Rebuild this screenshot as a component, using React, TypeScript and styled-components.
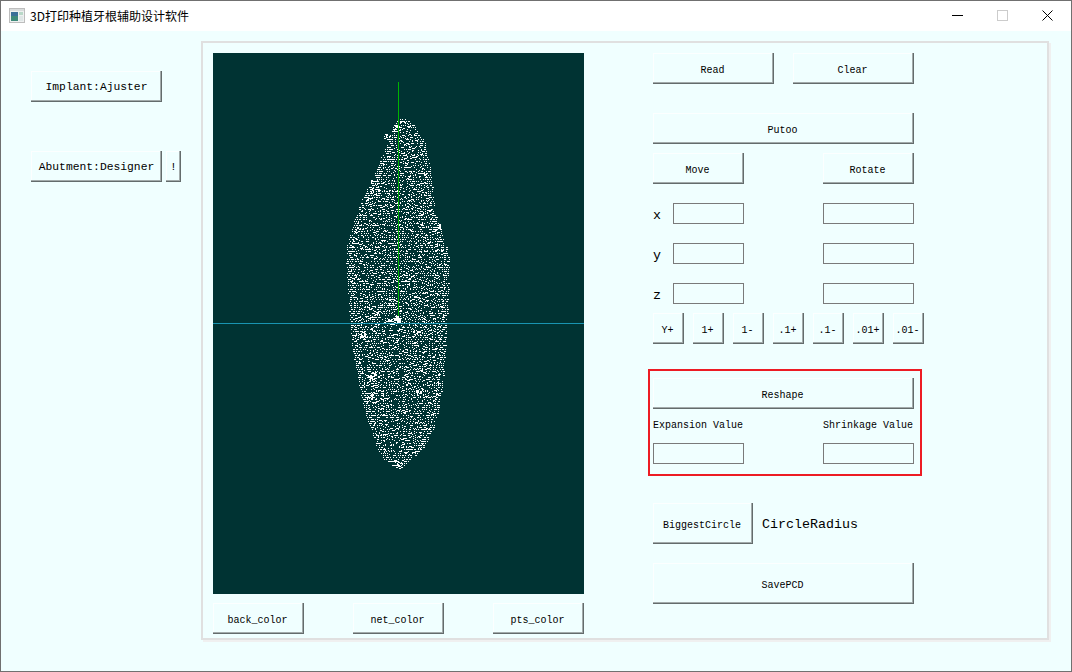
import React, { useMemo } from "react";
import styled, { createGlobalStyle } from "styled-components";

const Global = createGlobalStyle`
  html, body { margin: 0; padding: 0; background: #f0ffff; }
  * { box-sizing: border-box; }
`;

const Win = styled.div`
  width: 1072px;
  height: 672px;
  border: 1px solid #707070;
  background: #f0ffff;
  display: flex;
  flex-direction: column;
  overflow: hidden;
`;
const TitleBar = styled.header`
  height: 30px;
  background: #fff;
  display: flex;
  align-items: center;
  padding: 0 1px 2px 8px;
  flex: none;
`;
const Title = styled.span`
  margin-left: 5px;
  font: 12px "Noto Sans CJK SC", "Liberation Sans", sans-serif;
  color: #000;
  flex: 1;
`;
const WinControl = styled.div`
  width: 45px;
  height: 28px;
  display: flex;
  align-items: center;
  justify-content: center;
`;
const Body = styled.main`
  flex: 1;
  display: flex;
  align-items: flex-start;
`;
const Side = styled.aside`
  width: 200px;
  flex: none;
  padding: 40px 0 0 30px;
`;
const SideRow = styled.div<{ $top?: number }>`
  display: flex;
  gap: 4px;
  margin-top: ${(p) => p.$top ?? 0}px;
`;
const Btn = styled.button<{ $w: number; $h?: number; $big?: boolean }>`
  width: ${(p) => p.$w}px;
  height: ${(p) => p.$h ?? 31}px;
  flex: none;
  padding: ${(p) => (p.$big ? 1 : 4)}px ${(p) => (p.$big ? 0 : 2)}px 0 0;
  border: 0;
  border-radius: 0;
  background: #f0ffff;
  color: #000;
  font-family: "Liberation Mono", "DejaVu Sans Mono", monospace;
  font-size: ${(p) => (p.$big ? 11.33 : 10)}px;
  white-space: nowrap;
  box-shadow: inset -1px -1px 0 #646c6c, inset -2px -2px 0 #a3abab, inset 1px 1px 0 #fcffff;
`;
const Panel = styled.section`
  width: 848px;
  height: 599px;
  margin-top: 10px;
  border: 2px solid #e0e0e0;
  box-shadow: 2px 2px 0 #f0f0f0;
  padding: 10px 0 0 10px;
  display: flex;
  gap: 69px;
`;
const ViewCol = styled.div`
  width: 371px;
  flex: none;
`;
const Canvas = styled.div`
  width: 371px;
  height: 541px;
  background: #003333;
`;
const ColorRow = styled.div`
  display: flex;
  justify-content: space-between;
  margin-top: 9px;
`;
const ToolCol = styled.div`
  width: 261px;
  flex: none;
`;
const Row = styled.div<{ $top?: number; $gap?: number; $between?: boolean }>`
  display: flex;
  align-items: center;
  margin-top: ${(p) => p.$top ?? 0}px;
  gap: ${(p) => p.$gap ?? 0}px;
  justify-content: ${(p) => (p.$between ? "space-between" : "flex-start")};
`;
const AxisRow = styled.div<{ $top: number }>`
  display: grid;
  grid-template-columns: 20px 71px 1fr 91px;
  align-items: center;
  margin-top: ${(p) => p.$top}px;
`;
const AxisLabel = styled.span`
  padding-top: 3px;
  font: 13.33px "Liberation Mono", monospace;
  color: #000;
`;
const Field = styled.input<{ $w: number; $col?: number }>`
  width: ${(p) => p.$w}px;
  height: 21px;
  grid-column: ${(p) => p.$col ?? "auto"};
  border: 1px solid #7a7a7a;
  border-radius: 0;
  background: #f0ffff;
  padding: 0;
  outline: none;
`;
const RedBox = styled.div`
  width: 274px;
  height: 107px;
  margin: 25px 0 0 -5px;
  border: 2px solid #ed1c24;
  padding: 7px 0 0 3px;
`;
const Inner = styled.div`
  width: 261px;
`;
const SmallLabel = styled.span`
  width: 91px;
  font: 10px/14px "Liberation Mono", monospace;
  color: #000;
  white-space: nowrap;
`;
const Radius = styled.span`
  margin-left: 9px;
  padding-top: 2px;
  font: 13.33px "Liberation Mono", monospace;
  color: #000;
`;

const OUT: [number, number, number][] = [
  [119, 398, 405], [122, 394, 412], [130, 391, 418], [143, 387, 425], [160, 380, 429],
  [177, 373, 431], [193, 365, 433], [210, 357, 435], [227, 352, 440], [243, 347, 445],
  [260, 346, 449], [277, 347, 449], [293, 348, 448], [323, 350, 447], [347, 352, 445],
  [380, 358, 443], [413, 365, 438], [430, 371, 433], [447, 377, 424], [460, 384, 410], [466, 392, 403],
];

function edges(y: number): [number, number] {
  for (let i = 0; i < OUT.length - 1; i++) {
    const a = OUT[i], b = OUT[i + 1];
    if (y >= a[0] && y <= b[0]) {
      const t = (y - a[0]) / (b[0] - a[0]);
      return [a[1] + (b[1] - a[1]) * t, a[2] + (b[2] - a[2]) * t];
    }
  }
  return [398, 398];
}

function buildCloud(): string {
  let s = 20240611;
  const r = () => {
    s = (s + 0x6d2b79f5) | 0;
    let t = Math.imul(s ^ (s >>> 15), 1 | s);
    t = (t + Math.imul(t ^ (t >>> 7), 61 | t)) ^ t;
    return ((t ^ (t >>> 14)) >>> 0) / 4294967296;
  };
  const ox = 213, oy = 53;
  let d = "";
  const dot = (x: number, y: number, w = 1, h = 1) => {
    d += `M${Math.round(x) - ox} ${Math.round(y) - oy}h${w}v${h}h${-w}z`;
  };
  for (let y = 119; y <= 466; y += 2) {
    const [l, rr] = edges(y);
    for (const off of [0, 1, 2]) {
      if (r() < 0.8) dot(l + off * 2 + r() * 1.5, y, r() < 0.25 ? 2 : 1);
      if (r() < 0.8) dot(rr - off * 2 - r() * 1.5, y, r() < 0.25 ? 2 : 1);
    }
    let x = l + 4 + r() * 2;
    while (x < rr - 4) {
      const v = r();
      if (v < 0.8) dot(x, y + (r() < 0.3 ? 1 : 0), v < 0.07 ? 3 : v < 0.2 ? 2 : 1);
      x += 2 + Math.floor(r() * 2);
    }
  }
  const blobs = [[375, 190], [387, 137], [397, 128], [392, 302], [362, 335], [396, 319], [416, 333], [372, 375], [419, 390], [370, 396], [371, 377], [398, 465], [437, 227], [374, 182], [391, 322]];
  for (const [bx, by] of blobs) {
    for (let i = 0; i < 16; i++) dot(bx + (r() - 0.5) * 7, by + (r() - 0.5) * 6, 1 + Math.floor(r() * 2));
  }
  return d;
}

const CloudSvg = styled.svg`
  display: block;
`;

function PointCloud() {
  const d = useMemo(buildCloud, []);
  return (
    <CloudSvg width={371} height={541} viewBox="0 0 371 541" shapeRendering="crispEdges">
      <path d={d} fill="#ffffff" />
      <rect x={185} y={29} width={1} height={238} fill="#00b400" />
      <rect x={0} y={270} width={371} height={1} fill="#22b5dc" opacity={0.75} />
      <path d="M185 262l3 5h-6zM184 267h4v3h-4z" fill="#ffffff" />
    </CloudSvg>
  );
}

const AppIcon = () => (
  <svg width="16" height="15" viewBox="0 0 16 15">
    <rect x="0.5" y="0.5" width="15" height="14" fill="#eef0f0" stroke="#bdbdbd" />
    <rect x="1" y="1" width="14" height="2" fill="#d9dcdc" />
    <rect x="2" y="4" width="7" height="9" fill="#3f8a7a" />
    <rect x="2" y="4" width="7" height="4" fill="#3a6f98" />
    <rect x="10" y="4" width="4" height="3" fill="#b9d8c8" />
    <rect x="10" y="8" width="4" height="5" fill="#dfe6e6" />
  </svg>
);

export default function App() {
  return (
    <Win>
      <Global />
      <TitleBar>
        <AppIcon />
        <Title>3D打印种植牙根辅助设计软件</Title>
        <WinControl>
          <svg width="11" height="11" viewBox="0 0 11 11" shapeRendering="crispEdges"><rect x="0" y="5" width="11" height="1" fill="#000" /></svg>
        </WinControl>
        <WinControl>
          <svg width="11" height="11" viewBox="0 0 11 11" shapeRendering="crispEdges"><rect x="0.5" y="0.5" width="10" height="10" fill="none" stroke="#cccccc" /></svg>
        </WinControl>
        <WinControl>
          <svg width="11" height="11" viewBox="0 0 11 11"><path d="M0.5 0.5L10.5 10.5M10.5 0.5L0.5 10.5" stroke="#000" fill="none" /></svg>
        </WinControl>
      </TitleBar>
      <Body>
        <Side>
          <SideRow><Btn $w={131} $big>Implant:Ajuster</Btn></SideRow>
          <SideRow $top={49}>
            <Btn $w={131} $big>Abutment:Designer</Btn>
            <Btn $w={15} $big>!</Btn>
          </SideRow>
        </Side>
        <Panel>
          <ViewCol>
            <Canvas><PointCloud /></Canvas>
            <ColorRow>
              <Btn $w={91}>back_color</Btn>
              <Btn $w={91}>net_color</Btn>
              <Btn $w={91}>pts_color</Btn>
            </ColorRow>
          </ViewCol>
          <ToolCol>
            <Row $between>
              <Btn $w={121}>Read</Btn>
              <Btn $w={121}>Clear</Btn>
            </Row>
            <Row $top={29}><Btn $w={261}>Putoo</Btn></Row>
            <Row $top={9} $between>
              <Btn $w={91}>Move</Btn>
              <Btn $w={91}>Rotate</Btn>
            </Row>
            {["x", "y", "z"].map((a) => (
              <AxisRow key={a} $top={19}>
                <AxisLabel>{a}</AxisLabel>
                <Field $w={71} />
                <Field $w={91} $col={4} />
              </AxisRow>
            ))}
            <Row $top={9} $gap={9}>
              {["Y+", "1+", "1-", ".1+", ".1-", ".01+", ".01-"].map((t) => (
                <Btn key={t} $w={31}>{t}</Btn>
              ))}
            </Row>
            <RedBox>
              <Inner>
                <Btn $w={261}>Reshape</Btn>
                <Row $top={10} $between>
                  <SmallLabel>Expansion Value</SmallLabel>
                  <SmallLabel>Shrinkage Value</SmallLabel>
                </Row>
                <Row $top={10} $between>
                  <Field $w={91} />
                  <Field $w={91} />
                </Row>
              </Inner>
            </RedBox>
            <Row $top={27}>
              <Btn $w={100} $h={41}>BiggestCircle</Btn>
              <Radius>CircleRadius</Radius>
            </Row>
            <Row $top={19}><Btn $w={261} $h={41}>SavePCD</Btn></Row>
          </ToolCol>
        </Panel>
      </Body>
    </Win>
  );
}
